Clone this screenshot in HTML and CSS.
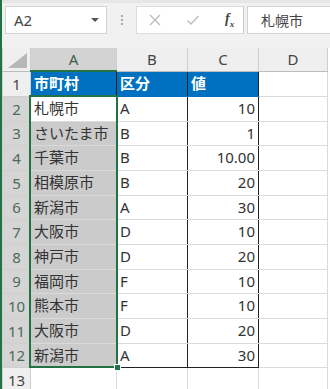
FILE: index.html
```html
<!DOCTYPE html>
<html lang="ja">
<head>
  <meta charset="UTF-8" />
  <meta name="viewport" content="width=device-width, initial-scale=1.0" />
  <title>Sheet1</title>
  <link rel="stylesheet" href="styles.css">
</head>
<body>
<div class="app">

  <!-- formula bar -->
  <div class="formula-bar">
    <div class="name-box">
      <span>A2</span>
      <span class="caret"></span>
    </div>
    <div class="grip">
      <svg width="4" height="12" viewBox="0 0 4 12"><circle cx="2" cy="2" r="1.1" fill="#9a9a9a"/><circle cx="2" cy="6" r="1.1" fill="#9a9a9a"/><circle cx="2" cy="10" r="1.1" fill="#9a9a9a"/></svg>
    </div>
    <div class="fx-buttons">
      <svg class="btn" width="14" height="14" viewBox="0 0 14 14"><path d="M2 2 L12 12 M12 2 L2 12" stroke="#bdbdbd" stroke-width="1.4" fill="none"/></svg>
      <svg class="btn" width="14" height="14" viewBox="0 0 14 14"><path d="M1.5 7.5 L5 11 L12.5 3" stroke="#bdbdbd" stroke-width="1.4" fill="none"/></svg>
      <span class="fx">f<sub>x</sub></span>
    </div>
    <div class="formula-input">札幌市</div>
  </div>

  <!-- sheet -->
  <div class="sheet">
    <table class="grid">
      <colgroup>
        <col class="c-row"><col class="c-a"><col class="c-b"><col class="c-c"><col>
      </colgroup>
      <tr class="head">
        <th class="corner"><span class="tri"></span></th>
        <th class="col-sel">A</th><th>B</th><th>C</th><th>D</th>
      </tr>
      <tr class="h25">
        <th class="rn">1</th>
        <td class="hd t-l">市町村</td><td class="hd">区分</td><td class="hd t-r">値</td><td></td>
      </tr>
      <tr class="h25">
        <th class="rn sel">2</th>
        <td class="t t-l">札幌市</td><td class="t">A</td><td class="t t-r num">10</td><td></td>
      </tr>
      <tr class="h24">
        <th class="rn sel">3</th>
        <td class="t t-l g">さいたま市</td><td class="t">B</td><td class="t t-r num">1</td><td></td>
      </tr>
      <tr class="h25">
        <th class="rn sel">4</th>
        <td class="t t-l g">千葉市</td><td class="t">B</td><td class="t t-r num">10.00</td><td></td>
      </tr>
      <tr class="h25">
        <th class="rn sel">5</th>
        <td class="t t-l g">相模原市</td><td class="t">B</td><td class="t t-r num">20</td><td></td>
      </tr>
      <tr class="h24">
        <th class="rn sel">6</th>
        <td class="t t-l g">新潟市</td><td class="t">A</td><td class="t t-r num">30</td><td></td>
      </tr>
      <tr class="h25">
        <th class="rn sel">7</th>
        <td class="t t-l g">大阪市</td><td class="t">D</td><td class="t t-r num">10</td><td></td>
      </tr>
      <tr class="h25">
        <th class="rn sel">8</th>
        <td class="t t-l g">神戸市</td><td class="t">D</td><td class="t t-r num">20</td><td></td>
      </tr>
      <tr class="h24">
        <th class="rn sel">9</th>
        <td class="t t-l g">福岡市</td><td class="t">F</td><td class="t t-r num">10</td><td></td>
      </tr>
      <tr class="h25">
        <th class="rn sel">10</th>
        <td class="t t-l g">熊本市</td><td class="t">F</td><td class="t t-r num">10</td><td></td>
      </tr>
      <tr class="h25">
        <th class="rn sel">11</th>
        <td class="t t-l g">大阪市</td><td class="t">D</td><td class="t t-r num">20</td><td></td>
      </tr>
      <tr class="h24">
        <th class="rn sel">12</th>
        <td class="t t-l t-b g">新潟市</td><td class="t t-b">A</td><td class="t t-r t-b num">30</td><td></td>
      </tr>
      <tr class="h25">
        <th class="rn">13</th>
        <td></td><td></td><td></td><td></td>
      </tr>
    </table>

    <!-- selection A2:A12 -->
    <div class="selection"></div>
    <div class="fill-handle"></div>
  </div>

</div>
</body>
</html>
```

FILE: styles.css
```css
* {
  box-sizing: border-box;
}
body {
  margin: 0;
  width: 330px;
  height: 389px;
  overflow: hidden;
  font-family: "Noto Sans", "Noto Sans CJK JP", sans-serif;
  background: #fff;
}
.app {
  border-left: 2px solid #217346;
  height: 389px;
  background: #fff;
}

/* formula bar */
.formula-bar {
  display: flex;
  align-items: center;
  height: 48px;
  padding: 0 0 11px 3px;
  background: #f1f1f1;
  border-top: 3px solid #e6e6e6;
}
.name-box {
  width: 102px;
  height: 28px;
  background: #fff;
  border: 1px solid #d3d3d3;
  display: flex;
  align-items: center;
  justify-content: space-between;
  padding: 0 7px 0 8px;
  font-size: 15px;
  color: #444;
}
.caret {
  width: 0;
  height: 0;
  border-left: 4px solid transparent;
  border-right: 4px solid transparent;
  border-top: 4px solid #555;
}
.grip {
  width: 29px;
  display: flex;
  justify-content: center;
}
.fx-buttons {
  width: 108px;
  height: 28px;
  background: #fff;
  border: 1px solid #dcdcdc;
  border-right: 1px solid #c4c4c4;
  display: flex;
  align-items: center;
  padding-left: 11px;
  gap: 24px;
}
.fx {
  font-family: "Liberation Serif", serif;
  font-style: italic;
  font-weight: bold;
  font-size: 14px;
  color: #444;
  margin-left: 1px;
}
.fx sub {
  font-size: 9px;
}
.formula-input {
  flex: 1;
  height: 28px;
  margin-left: 3px;
  background: #fff;
  border: 1px solid #d3d3d3;
  border-right: none;
  padding-left: 13px;
  display: flex;
  align-items: center;
  font-size: 14px;
  color: #444;
}

/* sheet */
.sheet {
  position: relative;
}
.grid {
  table-layout: fixed;
  border-collapse: collapse;
  width: 326px;
  font-size: 15px;
  color: #333;
}
.c-row { width: 28px; }
.c-a { width: 86px; }
.c-b { width: 71px; }
.c-c { width: 71px; }
.grid td {
  border: 1px solid #dadada;
  padding: 0 3px;
  white-space: nowrap;
  overflow: hidden;
  line-height: 1;
}
.grid th {
  font-weight: normal;
  color: #444;
  background: #efefef;
  border: 1px solid #cfcfcf;
  padding: 0;
}
.head {
  height: 23px;
}
.head th {
  border-top: none;
  border-bottom: 1px solid #bdbdbd;
}
.head th.col-sel {
  background: #d3d3d3;
  color: #3f5e4b;
  border-bottom: 2px solid #217346;
}
.corner {
  position: relative;
}
.tri {
  position: absolute;
  right: 3px;
  bottom: 3px;
  width: 0;
  height: 0;
  border-left: 19px solid transparent;
  border-bottom: 15px solid #b7b7b7;
}
.h25 { height: 25px; }
.h24 { height: 24px; }

.rn {
  text-align: center;
}
.rn.sel {
  background: #d5d5d5;
  color: #4d6b58;
}

/* data table */
.grid td.hd {
  background: #0070c0;
  color: #fff;
  font-weight: bold;
  border: 1px solid #0070c0;
  border-right: 1px solid #222;
  border-top: 1px solid #222;
}
.grid td.t {
  border-top: 1px solid #222;
  border-right: 1px solid #222;
}
.grid td.t-l {
  border-left: 1px solid #222;
}
.grid td.t-b {
  border-bottom: 1px solid #222;
}
.grid td.num {
  text-align: right;
}
.grid td.g {
  background: #cbcbcb;
}

.selection {
  position: absolute;
  left: 27px;
  top: 47px;
  width: 89px;
  height: 273px;
  border: 2px solid #217346;
  pointer-events: none;
}
.fill-handle {
  position: absolute;
  left: 112px;
  top: 316px;
  width: 7px;
  height: 7px;
  background: #217346;
  border: 1px solid #fff;
}
```
